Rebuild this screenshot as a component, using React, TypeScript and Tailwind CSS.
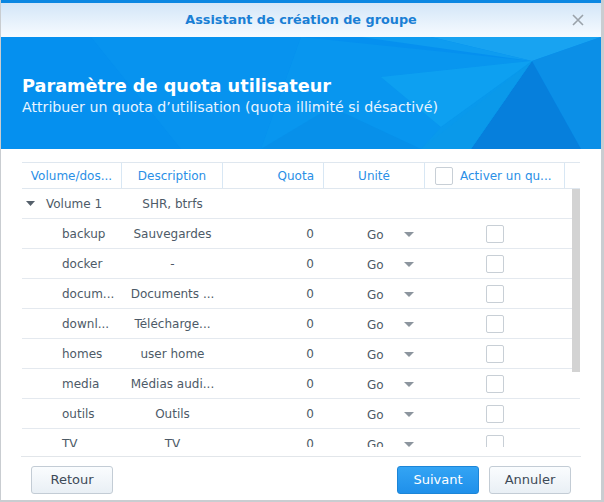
import React from "react";

const rows = [
  { name: "backup", desc: "Sauvegardes" },
  { name: "docker", desc: "-" },
  { name: "docum...", desc: "Documents ..." },
  { name: "downl...", desc: "Télécharge..." },
  { name: "homes", desc: "user home" },
  { name: "media", desc: "Médias audi..." },
  { name: "outils", desc: "Outils" },
  { name: "TV", desc: "TV" },
];

function Checkbox() {
  return <div className="w-[18px] h-[18px] border border-[#c8cfd6] rounded-[2px] bg-white" />;
}

function Caret() {
  return (
    <svg width="10" height="6" viewBox="0 0 10 6">
      <path d="M0 0 L10 0 L5 5 Z" fill="#8c959e" />
    </svg>
  );
}

export default function App() {
  return (
    <div
      className="w-[604px] h-[502px] bg-[#c9cdd1] flex"
      style={{ fontFamily: '"DejaVu Sans", Verdana, sans-serif' }}
    >
      <div className="ml-[1px] w-[600px] h-[500px] bg-white flex flex-col">
        <div className="h-[3px] bg-[#0b87e2]" />
        <div className="h-[34px] bg-gradient-to-b from-[#d3e6f8] to-[#f7fbff] flex items-center justify-center relative">
          <span className="text-[12.8px] font-bold text-[#1a7fd5]">Assistant de création de groupe</span>
          <svg className="absolute left-[571px] top-[11px]" width="12" height="12" viewBox="0 0 12 12">
            <path d="M1 1 L11 11 M11 1 L1 11" stroke="#9aa2aa" strokeWidth="1.6" />
          </svg>
        </div>
        <div className="h-[112px] bg-[#0590ef] relative overflow-hidden">
          <svg className="absolute inset-0" width="600" height="112" viewBox="0 0 600 112">
            <polygon points="90,0 300,0 260,112 180,112" fill="#0a95f0" opacity="0.5" />
            <polygon points="300,0 531,24 470,112 260,112" fill="#0896ef" />
            <polygon points="430,0 600,0 531,24" fill="#18a3f1" />
            <polygon points="360,0 430,0 531,24" fill="#0e9cf0" />
            <polygon points="531,24 600,0 600,112 580,112" fill="#0b8fe7" />
            <polygon points="531,24 580,112 470,112" fill="#067fdc" />
            <polygon points="531,24 470,112 420,112" fill="#0a96ea" />
            <polygon points="380,40 531,24 440,90" fill="#12aaf3" opacity="0.55" />
            <polygon points="440,90 531,24 470,112 420,112" fill="#0a9be9" opacity="0.5" />
            <polygon points="260,112 330,70 420,112" fill="#0589e6" opacity="0.5" />
          </svg>
          <div className="relative pl-[21px] pt-[38px]">
            <div className="text-[17.7px] font-bold text-white leading-[22px]">Paramètre de quota utilisateur</div>
            <div className="text-[14.2px] text-[#e8f4ff] leading-[18px] mt-[1px]">
              Attribuer un quota d’utilisation (quota illimité si désactivé)
            </div>
          </div>
        </div>
        <div className="flex-1 flex flex-col px-[21px] pt-[13px]">
          <div className="w-[558px] relative">
            <div className="flex h-[27px] border-t border-b border-[#dfe7ef] text-[12px] text-[#2a8fe6] items-stretch">
              <div className="w-[100px] flex items-center justify-center border-r border-[#d8e7f4]">Volume/dos...</div>
              <div className="w-[101px] flex items-center justify-center border-r border-[#d8e7f4]">Description</div>
              <div className="w-[101px] flex items-center justify-end pr-[9px] border-r border-[#d8e7f4]">Quota</div>
              <div className="w-[101px] flex items-center justify-center border-r border-[#d8e7f4]">Unité</div>
              <div className="w-[140px] flex items-center pl-[10px] gap-[7px] border-r border-[#d8e7f4]">
                <Checkbox />
                <span>Activer un qu...</span>
              </div>
              <div className="flex-1" />
            </div>
            <div className="h-[258px] overflow-hidden relative text-[12px] text-[#4d5a67]">
              <div className="flex h-[30px] border-b border-[#e4e9ef] items-center">
                <div className="w-[100px] flex items-center pl-[4px]">
                  <svg width="9" height="5" viewBox="0 0 9 5">
                    <path d="M0 0 L9 0 L4.5 5 Z" fill="#55606b" />
                  </svg>
                  <span className="ml-[11px]">Volume 1</span>
                </div>
                <div className="w-[101px] text-center">SHR, btrfs</div>
              </div>
              {rows.map((r) => (
                <div key={r.name} className="flex h-[30px] border-b border-[#e4e9ef] items-center">
                  <div className="w-[100px] pl-[40px]">{r.name}</div>
                  <div className="w-[101px] text-center whitespace-nowrap">{r.desc}</div>
                  <div className="w-[101px] text-right pr-[10px]">0</div>
                  <div className="w-[101px] flex items-center pl-[43px] pt-[2px]">
                    <span className="w-[37px]">Go</span>
                    <Caret />
                  </div>
                  <div className="w-[140px] flex justify-center">
                    <Checkbox />
                  </div>
                </div>
              ))}
              <div className="absolute left-[550px] top-0 w-[8px] h-[183px] bg-[#d3d3d3]" />
            </div>
          </div>
          <div className="mt-[9px] border-t border-[#e2e6ea] w-[560px] -ml-[1px]" />
          <div className="flex items-center pt-[9px] pl-[9px] pr-[9px] text-[13px]">
            <button className="w-[82px] h-[28px] rounded-[3px] border border-[#c3ccd5] bg-gradient-to-b from-[#fafcfe] to-[#e9eff5] text-[#3d4a57]">
              Retour
            </button>
            <div className="flex-1" />
            <button className="w-[82px] h-[28px] rounded-[3px] border border-[#1c85d7] bg-gradient-to-b from-[#33a4f4] to-[#1f90ea] text-white">
              Suivant
            </button>
            <button className="ml-[10px] w-[82px] h-[28px] rounded-[3px] border border-[#c3ccd5] bg-gradient-to-b from-[#fafcfe] to-[#e9eff5] text-[#3d4a57]">
              Annuler
            </button>
          </div>
        </div>
      </div>
    </div>
  );
}
